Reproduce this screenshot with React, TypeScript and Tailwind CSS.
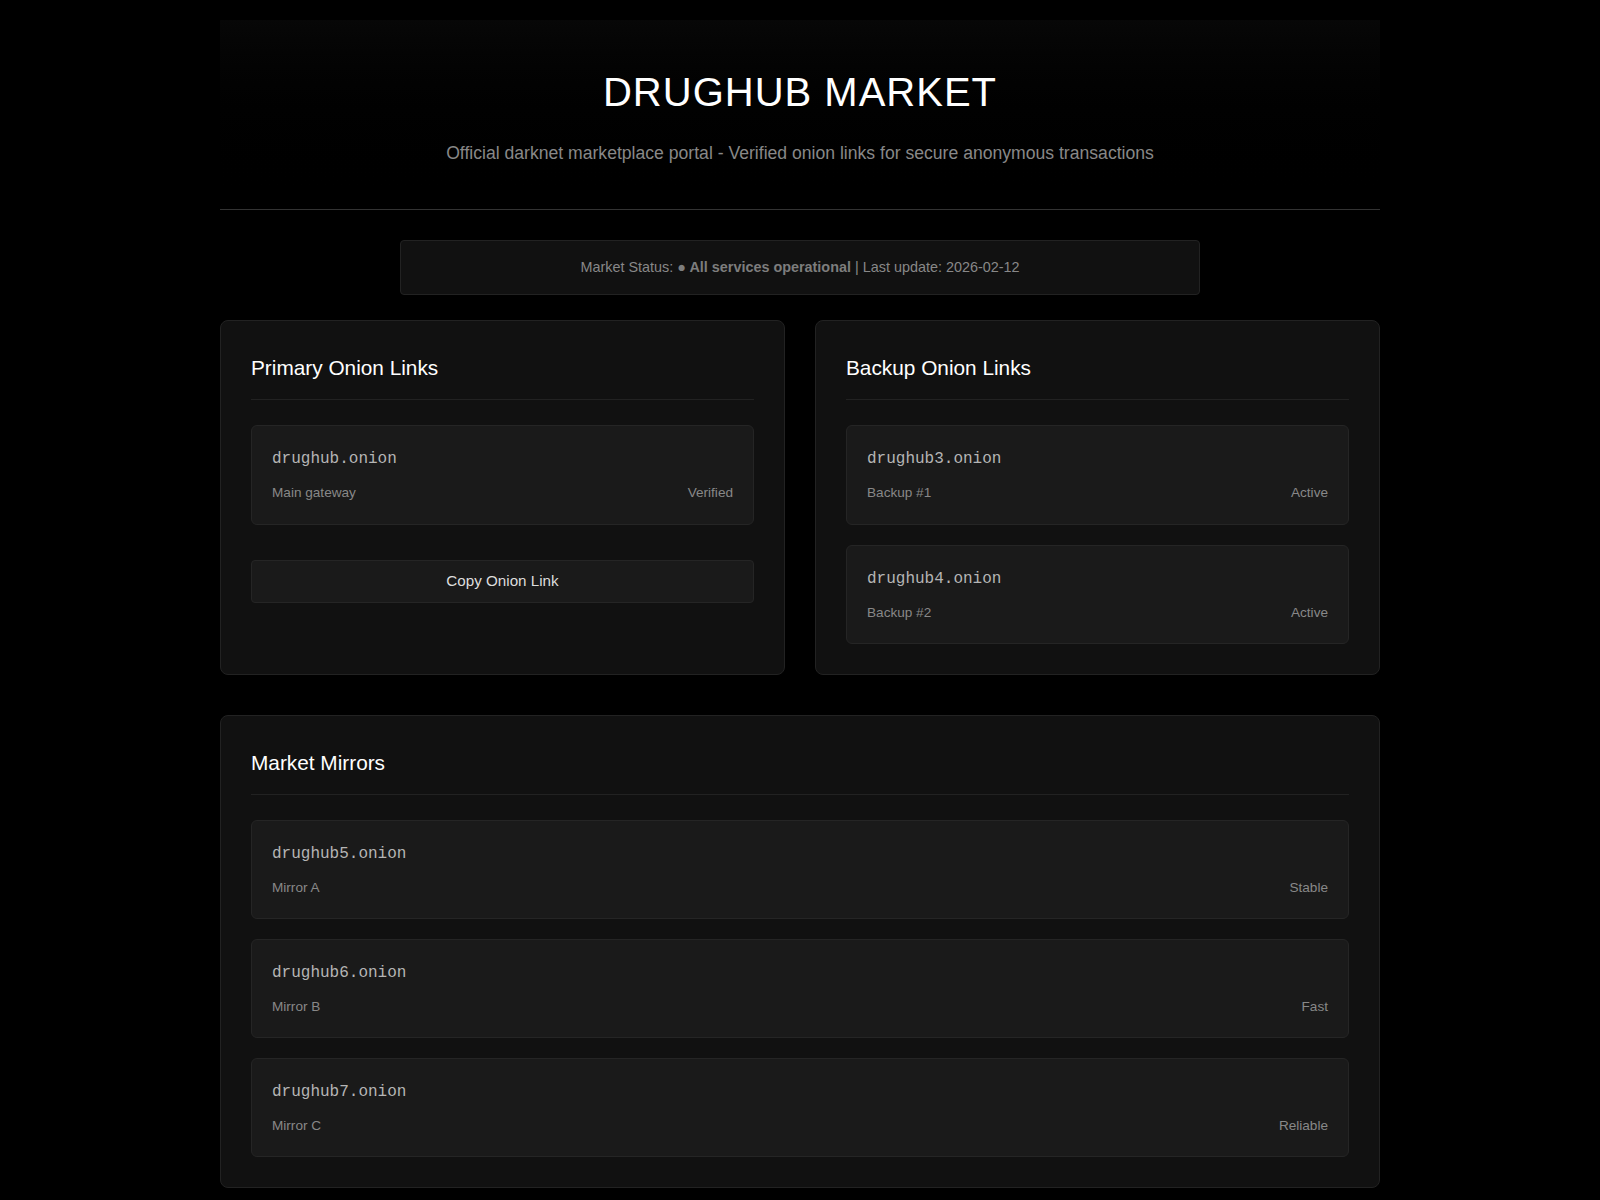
import React from "react";

type Item = { url: string; label: string; status: string };

function LinkItem({ item }: { item: Item }) {
  return (
    <div className="bg-[#1a1a1a] border border-[#252525] rounded-[6px] px-5 pt-[21px] pb-[19.4px]">
      <div className="font-['Liberation_Mono','Courier_New',monospace] text-[16px] leading-[1.5] text-[#b5b5b5] mb-[11px]">
        {item.url}
      </div>
      <div className="flex justify-between text-[13.6px] leading-[1.6] text-[#888888]">
        <span>{item.label}</span>
        <span>{item.status}</span>
      </div>
    </div>
  );
}

function Card({ title, children }: { title: string; children: React.ReactNode }) {
  return (
    <div className="bg-[#111111] border border-[#222222] rounded-[8px] p-[30px]">
      <h2 className="text-[20.8px] leading-[1.6] text-white font-normal pb-[15px] border-b border-[#222222] mb-[25px]">
        {title}
      </h2>
      {children}
    </div>
  );
}

export default function App() {
  const backups: Item[] = [
    { url: "drughub3.onion", label: "Backup #1", status: "Active" },
    { url: "drughub4.onion", label: "Backup #2", status: "Active" },
  ];
  const mirrors: Item[] = [
    { url: "drughub5.onion", label: "Mirror A", status: "Stable" },
    { url: "drughub6.onion", label: "Mirror B", status: "Fast" },
    { url: "drughub7.onion", label: "Mirror C", status: "Reliable" },
  ];
  return (
    <div className="min-h-screen bg-black font-['Liberation_Sans',Arial,sans-serif] leading-[1.6] text-[#cccccc]">
      <div className="max-w-[1200px] mx-auto p-5">
        <header className="text-center pt-10 pb-[42px] border-b border-[#333333] bg-gradient-to-b from-[#070707] to-[#000000]">
          <h1 className="text-[40px] leading-[1.6] tracking-[1px] text-white font-normal mb-[15px]">
            DRUGHUB MARKET
          </h1>
          <p className="text-[17.6px] leading-[1.6] text-[#888888]">
            Official darknet marketplace portal - Verified onion links for secure anonymous transactions
          </p>
        </header>

        <div className="max-w-[800px] mx-auto mt-[30px] mb-[25px] bg-[#111111] border border-[#222222] rounded-[4px] py-[15px] text-center text-[14.4px] leading-[1.6] text-[#888888]">
          Market Status: <span className="font-bold text-[#7d7d7d]">● All services operational</span> | Last update: 2026-02-12
        </div>

        <div className="grid grid-cols-2 gap-[30px] mb-[40px]">
          <Card title="Primary Onion Links">
            <LinkItem item={{ url: "drughub.onion", label: "Main gateway", status: "Verified" }} />
            <button className="mt-[35px] w-full h-[43px] bg-[#1a1a1a] border border-[#252525] rounded-[4px] text-[15.2px] text-[#dddddd]">
              Copy Onion Link
            </button>
          </Card>
          <Card title="Backup Onion Links">
            <div className="flex flex-col gap-5">
              {backups.map((b) => (
                <LinkItem key={b.url} item={b} />
              ))}
            </div>
          </Card>
        </div>

        <Card title="Market Mirrors">
          <div className="flex flex-col gap-5">
            {mirrors.map((m) => (
              <LinkItem key={m.url} item={m} />
            ))}
          </div>
        </Card>
      </div>
    </div>
  );
}
